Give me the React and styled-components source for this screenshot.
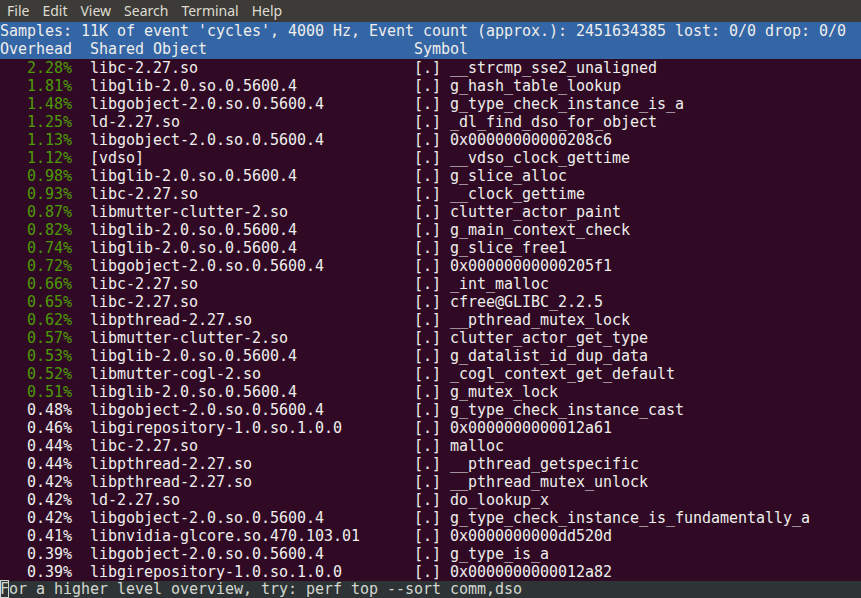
import React from 'react'
import styled, { createGlobalStyle } from 'styled-components'

const GlobalStyle = createGlobalStyle`
  html, body { margin: 0; padding: 0; background: #300a24; overflow: hidden; }
`

const rows = [
  ['2.28%', 'libc-2.27.so', '__strcmp_sse2_unaligned'],
  ['1.81%', 'libglib-2.0.so.0.5600.4', 'g_hash_table_lookup'],
  ['1.48%', 'libgobject-2.0.so.0.5600.4', 'g_type_check_instance_is_a'],
  ['1.25%', 'ld-2.27.so', '_dl_find_dso_for_object'],
  ['1.13%', 'libgobject-2.0.so.0.5600.4', '0x00000000000208c6'],
  ['1.12%', '[vdso]', '__vdso_clock_gettime'],
  ['0.98%', 'libglib-2.0.so.0.5600.4', 'g_slice_alloc'],
  ['0.93%', 'libc-2.27.so', '__clock_gettime'],
  ['0.87%', 'libmutter-clutter-2.so', 'clutter_actor_paint'],
  ['0.82%', 'libglib-2.0.so.0.5600.4', 'g_main_context_check'],
  ['0.74%', 'libglib-2.0.so.0.5600.4', 'g_slice_free1'],
  ['0.72%', 'libgobject-2.0.so.0.5600.4', '0x00000000000205f1'],
  ['0.66%', 'libc-2.27.so', '_int_malloc'],
  ['0.65%', 'libc-2.27.so', 'cfree@GLIBC_2.2.5'],
  ['0.62%', 'libpthread-2.27.so', '__pthread_mutex_lock'],
  ['0.57%', 'libmutter-clutter-2.so', 'clutter_actor_get_type'],
  ['0.53%', 'libglib-2.0.so.0.5600.4', 'g_datalist_id_dup_data'],
  ['0.52%', 'libmutter-cogl-2.so', '_cogl_context_get_default'],
  ['0.51%', 'libglib-2.0.so.0.5600.4', 'g_mutex_lock'],
  ['0.48%', 'libgobject-2.0.so.0.5600.4', 'g_type_check_instance_cast'],
  ['0.46%', 'libgirepository-1.0.so.1.0.0', '0x0000000000012a61'],
  ['0.44%', 'libc-2.27.so', 'malloc'],
  ['0.44%', 'libpthread-2.27.so', '__pthread_getspecific'],
  ['0.42%', 'libpthread-2.27.so', '__pthread_mutex_unlock'],
  ['0.42%', 'ld-2.27.so', 'do_lookup_x'],
  ['0.42%', 'libgobject-2.0.so.0.5600.4', 'g_type_check_instance_is_fundamentally_a'],
  ['0.41%', 'libnvidia-glcore.so.470.103.01', '0x0000000000dd520d'],
  ['0.39%', 'libgobject-2.0.so.0.5600.4', 'g_type_is_a'],
  ['0.39%', 'libgirepository-1.0.so.1.0.0', '0x0000000000012a82'],
]

const menus = ['File', 'Edit', 'View', 'Search', 'Terminal', 'Help']

export default function App() {
  return (
    <Window>
      <GlobalStyle />
      <MenuBar>
        {menus.map(m => <MenuItem key={m}>{m}</MenuItem>)}
      </MenuBar>
      <Terminal>
        <Header>
          <Line>Samples: 11K of event 'cycles', 4000 Hz, Event count (approx.): 2451634385 lost: 0/0 drop: 0/0</Line>
          <Row>
            <Cell>Overhead</Cell>
            <Cell>Shared Object</Cell>
            <Cell>Symbol</Cell>
          </Row>
        </Header>
        {rows.map((r, i) => (
          <Row key={i}>
            <Percent hot={parseFloat(r[0]) >= 0.5}>{r[0]}</Percent>
            <Cell>{r[1]}</Cell>
            <Cell>[.] {r[2]}</Cell>
          </Row>
        ))}
        <Status>
          <Cursor>F</Cursor>or a higher level overview, try: perf top --sort comm,dso
        </Status>
      </Terminal>
    </Window>
  )
}

const Window = styled.div`
  width: 861px;
  height: 598px;
  display: flex;
  flex-direction: column;
  background: #300a24;
  overflow: hidden;
`

const MenuBar = styled.div`
  height: 22px;
  display: flex;
  align-items: center;
  padding-left: 7px;
  gap: 13px;
  background: #3c3b37;
  color: #dfdbd2;
  font-family: "Noto Sans", sans-serif;
  font-size: 14px;
`

const MenuItem = styled.span`
  line-height: 22px;
`

const Terminal = styled.div`
  flex: 1;
  display: flex;
  flex-direction: column;
  color: #eeeeec;
  font-family: "DejaVu Sans Mono", monospace;
  font-size: 15px;
  letter-spacing: -0.03px;
  white-space: pre;
`

const Header = styled.div`
  background: #3465a4;
  padding-bottom: 1px;
`

const Line = styled.div`
  height: 18px;
  line-height: 18px;
`

const Row = styled.div`
  height: 18px;
  line-height: 18px;
  display: grid;
  grid-template-columns: 72px 342px 1fr;
  column-gap: 0;
  & > *:nth-child(2) { padding-left: 18px; }
`

const Cell = styled.span`
  overflow: hidden;
`

const Percent = styled.span`
  text-align: right;
  color: ${p => (p.hot ? '#4e9a06' : '#eeeeec')};
`

const Status = styled.div`
  margin-top: auto;
  height: 17px;
  line-height: 17px;
  background: #2e3436;
  color: #d3d7cf;
`

const Cursor = styled.span`
  outline: 1px solid #d3d7cf;
  outline-offset: -1px;
`
